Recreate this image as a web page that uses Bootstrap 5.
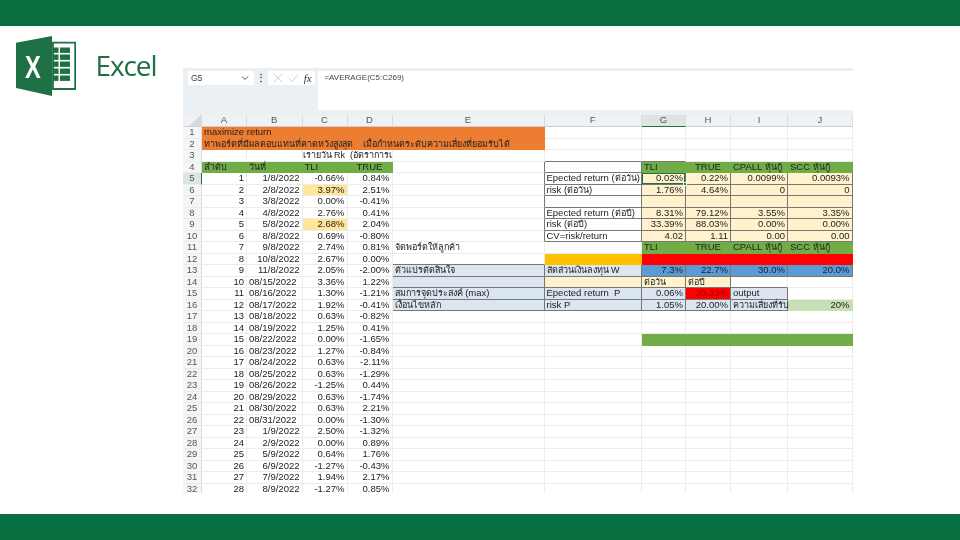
<!DOCTYPE html>
<html lang="th"><head><meta charset="utf-8"><title>Excel</title>
<link href="https://cdn.jsdelivr.net/npm/bootstrap@5.3.0/dist/css/bootstrap.min.css" rel="stylesheet">
<style>
html,body{height:100%;}
body{width:960px;height:540px;overflow:hidden;background:#fff;display:flex;flex-direction:column;font-family:"Noto Sans",sans-serif;}
.topbar,.botbar{height:26px;background:#076e3f;flex:none;}
.stage{flex:1;min-height:0;display:flex;align-items:flex-start;}
.brand{width:183px;flex:none;padding:10px 0 0 16px;display:flex;align-items:flex-start;gap:19.5px;filter:blur(.3px);}
.brandname{font-family:"Open Sans",sans-serif;font-size:28px;line-height:1;color:#1e7145;letter-spacing:-1.1px;margin-top:15px;}
.win{width:670px;height:424.5px;margin-top:42px;display:flex;flex-direction:column;overflow:hidden;filter:blur(.3px);}
.fbar{height:47px;background:#ebf0f4;padding:3px 0 0 5px;display:flex;align-items:flex-start;font:8px "Liberation Sans",sans-serif;color:#444;flex:none;}
.namebox{width:66px;height:14px;background:#fff;border-radius:2px;display:flex;align-items:center;justify-content:space-between;padding:0 5px 0 3px;font-size:8.5px;}
.fx{width:47px;height:14px;background:#fff;border-radius:2px;display:flex;align-items:center;justify-content:space-between;padding:0 3px 0 5px;}
.fx i{font:italic 11px "Liberation Serif",serif;color:#333;}
.dots{width:13.7px;height:14px;text-align:center;color:#555;font-weight:700;font-size:10px;line-height:13px;}
.fbox{flex:1;height:39px;margin-left:3.7px;background:#fff;border-radius:2px 0 0 2px;padding:2px 6px;}
.xl{table-layout:fixed;width:669.5px;border-collapse:separate;border-spacing:0;font:9.5px/10.5px "Liberation Sans",sans-serif;color:#222;}
.xl tr{height:11.5px;}
.xl thead tr{height:12px;}
.xl td{padding:0 2px;border-right:1px solid #ececec;border-bottom:1px solid #ececec;white-space:nowrap;vertical-align:bottom;}
.xl th{font-weight:400;text-align:center;color:#555;background:#f3f5f7;padding:0;border-right:1px solid #dcdcdc;border-bottom:1px solid #ececec;}
.xl thead th{background:#eff2f4;border-bottom:1px solid #cfcfcf;}
.xl th.corner{background:linear-gradient(135deg,#eff2f4 62%,#d6d9db 62%);}
.xl thead th.on{background:#e0e3e3;border-bottom:1px solid #217346;}
.xl tbody th.on{background:#e0e3e3;border-right:1px solid #217346;color:#217346;}
.th{font-size:9px;}
.nl{border-color:transparent !important;}
.or{background:#ed7d31;}
.gr{background:#70ad47;}
.am{background:#ffc000;}
.rd{background:#f00;}
.dk{color:#8e0000;}
.ye{background:#fff2cc;}
.hl{background:#ffe699;}
.lb{background:#dce6f1;}
.bl{background:#5b9bd5;}
.lg{background:#c6e0b4;}
.xl td.b{border-right-color:#777;border-bottom-color:#777;}
.xl td.rb{border-right-color:#777;}
.xl td.bb{border-bottom-color:#777;}
.nopad{padding-left:0 !important;}
.xl td.sel{position:relative;box-shadow:inset 0 0 0 1px #217346;}
.xl td.sel::after{content:"";position:absolute;right:-2px;bottom:-2px;width:4px;height:4px;background:#217346;border:1px solid #fff;}
</style></head><body>
<div class="topbar"></div>
<div class="stage"><div class="brand">
<svg width="60" height="60" viewBox="0 0 60 60" role="img" aria-label="Excel logo">
<path d="M37 6.7H59.2V53H37Z" fill="#fff" stroke="#1e7145" stroke-width="1.8"/>
<g fill="#1e7145"><rect x="37" y="11.5" width="5.5" height="5.4"/><rect x="44" y="11.5" width="10" height="5.4"/><rect x="37" y="18.5" width="5.5" height="5.4"/><rect x="44" y="18.5" width="10" height="5.4"/><rect x="37" y="25.5" width="5.5" height="5.4"/><rect x="44" y="25.5" width="10" height="5.4"/><rect x="37" y="32.5" width="5.5" height="5.4"/><rect x="44" y="32.5" width="10" height="5.4"/><rect x="37" y="39.5" width="5.5" height="5.4"/><rect x="44" y="39.5" width="10" height="5.4"/></g>
<path d="M0 6.7 36 0V60L0 52Z" fill="#1e7145"/>
<text transform="translate(17 41.5) scale(.74 1)" text-anchor="middle" font-family="Liberation Sans" font-weight="700" font-size="32" fill="#fff">X</text></svg>
<span class="brandname">Excel</span></div>
<div class="win"><div class="fbar"><div class="namebox">G5<svg width="8" height="6" viewBox="0 0 8 6"><path d="M1 1.5 4 4.5 7 1.5" fill="none" stroke="#555"/></svg></div><div class="dots">⋮</div><div class="fx"><svg width="10" height="10" viewBox="0 0 10 10"><path d="M1 1 9 9M9 1 1 9" stroke="#c4c4c4" stroke-width=".8"/></svg><svg width="11" height="10" viewBox="0 0 11 10"><path d="M1 5.5 4 8.5 10 1.5" fill="none" stroke="#c4c4c4" stroke-width=".8"/></svg><i>fx</i></div><div class="fbox">=AVERAGE(C5:C269)</div></div>
<table class="xl">
<colgroup><col style="width:19px"><col style="width:45px"><col style="width:55.5px"><col style="width:45px"><col style="width:45px"><col style="width:152px"><col style="width:97.5px"><col style="width:44px"><col style="width:45px"><col style="width:57px"><col style="width:64.5px"></colgroup>
<thead><tr><th class="corner"></th><th>A</th><th>B</th><th>C</th><th>D</th><th>E</th><th>F</th><th class="on">G</th><th>H</th><th>I</th><th>J</th></tr></thead>
<tbody>
<tr><th>1</th><td colspan="5" class="or nl">maximize return</td><td></td><td></td><td></td><td></td><td></td></tr>
<tr><th>2</th><td colspan="5" class="or nl th">ทาพอร์ตที่มีผลตอบแทนที่คาดหวังสูงสุด &nbsp; &nbsp;เมื่อกำหนดระดับความเสี่ยงที่ยอมรับได้</td><td></td><td></td><td></td><td></td><td></td></tr>
<tr><th>3</th><td></td><td></td><td colspan="2" class="nopad th">เรายวัน Rk &nbsp;(อัตราการเ</td><td></td><td class="bb"></td><td class="bb"></td><td></td><td></td><td></td></tr>
<tr><th>4</th><td class="gr nl th">ลำดับ</td><td class="gr nl th">วันที่</td><td class="gr nl">TLI</td><td class="gr nl text-center">TRUE</td><td class="rb"></td><td class="b"></td><td class="gr nl">TLI</td><td class="gr nl text-center">TRUE</td><td class="gr nl">CPALL <span class="th">หุ้นกู้</span></td><td class="gr nl">SCC <span class="th">หุ้นกู้</span></td></tr>
<tr><th class="on">5</th><td class="text-end">1</td><td class="text-end">1/8/2022</td><td class="text-end">-0.66%</td><td class="text-end">0.84%</td><td class="rb"></td><td class="b">Epected return (<span class="th">ต่อวัน</span>)</td><td class="ye b text-end sel">0.02%</td><td class="ye b text-end">0.22%</td><td class="ye b text-end">0.0099%</td><td class="ye b text-end">0.0093%</td></tr>
<tr><th>6</th><td class="text-end">2</td><td class="text-end">2/8/2022</td><td class="text-end hl">3.97%</td><td class="text-end">2.51%</td><td class="rb"></td><td class="b">risk (<span class="th">ต่อวัน</span>)</td><td class="ye b text-end">1.76%</td><td class="ye b text-end">4.64%</td><td class="ye b text-end">0</td><td class="ye b text-end">0</td></tr>
<tr><th>7</th><td class="text-end">3</td><td class="text-end">3/8/2022</td><td class="text-end">0.00%</td><td class="text-end">-0.41%</td><td class="rb"></td><td class="b"></td><td class="ye b"></td><td class="ye b"></td><td class="ye b"></td><td class="ye b"></td></tr>
<tr><th>8</th><td class="text-end">4</td><td class="text-end">4/8/2022</td><td class="text-end">2.76%</td><td class="text-end">0.41%</td><td class="rb"></td><td class="b">Epected return (<span class="th">ต่อปี</span>)</td><td class="ye b text-end">8.31%</td><td class="ye b text-end">79.12%</td><td class="ye b text-end">3.55%</td><td class="ye b text-end">3.35%</td></tr>
<tr><th>9</th><td class="text-end">5</td><td class="text-end">5/8/2022</td><td class="text-end hl">2.68%</td><td class="text-end">2.04%</td><td class="rb"></td><td class="b">risk (<span class="th">ต่อปี</span>)</td><td class="ye b text-end">33.39%</td><td class="ye b text-end">88.03%</td><td class="ye b text-end">0.00%</td><td class="ye b text-end">0.00%</td></tr>
<tr><th>10</th><td class="text-end">6</td><td class="text-end">8/8/2022</td><td class="text-end">0.69%</td><td class="text-end">-0.80%</td><td class="rb"></td><td class="b">CV=risk/return</td><td class="ye b text-end">4.02</td><td class="ye b text-end">1.11</td><td class="ye b text-end">0.00</td><td class="ye b text-end">0.00</td></tr>
<tr><th>11</th><td class="text-end">7</td><td class="text-end">9/8/2022</td><td class="text-end">2.74%</td><td class="text-end">0.81%</td><td class="th">จัดพอร์ตให้ลูกค้า</td><td></td><td class="gr nl">TLI</td><td class="gr nl text-center">TRUE</td><td class="gr nl">CPALL <span class="th">หุ้นกู้</span></td><td class="gr nl">SCC <span class="th">หุ้นกู้</span></td></tr>
<tr><th>12</th><td class="text-end">8</td><td class="text-end">10/8/2022</td><td class="text-end">2.67%</td><td class="text-end">0.00%</td><td class="bb"></td><td class="am nl"></td><td class="rd nl"></td><td class="rd nl"></td><td class="rd nl"></td><td class="rd nl"></td></tr>
<tr><th>13</th><td class="text-end">9</td><td class="text-end">11/8/2022</td><td class="text-end">2.05%</td><td class="text-end">-2.00%</td><td class="lb b th">ตัวแปรตัดสินใจ</td><td class="lb b th">สัดส่วนเงินลงทุน W</td><td class="bl b text-end">7.3%</td><td class="bl b text-end">22.7%</td><td class="bl b text-end">30.0%</td><td class="bl b text-end">20.0%</td></tr>
<tr><th>14</th><td class="text-end">10</td><td>08/15/2022</td><td class="text-end">3.36%</td><td class="text-end">1.22%</td><td class="lb b"></td><td class="ye b"></td><td class="ye b th">ต่อวัน</td><td class="ye b th">ต่อปี</td><td class="bb"></td><td></td></tr>
<tr><th>15</th><td class="text-end">11</td><td>08/16/2022</td><td class="text-end">1.30%</td><td class="text-end">-1.21%</td><td class="lb b"><span class="th">สมการจุดประสงค์</span> (max)</td><td class="lb b">Epected return &nbsp;P</td><td class="lb b text-end">0.06%</td><td class="rd b dk text-end">20.33%</td><td class="lb b">output</td><td></td></tr>
<tr><th>16</th><td class="text-end">12</td><td>08/17/2022</td><td class="text-end">1.92%</td><td class="text-end">-0.41%</td><td class="lb b th">เงื่อนไขหลัก</td><td class="lb b">risk P</td><td class="lb b text-end">1.05%</td><td class="lb b text-end">20.00%</td><td class="lb b th">ความเสี่ยงที่รับ</td><td class="lg nl text-end">20%</td></tr>
<tr><th>17</th><td class="text-end">13</td><td>08/18/2022</td><td class="text-end">0.63%</td><td class="text-end">-0.82%</td><td></td><td></td><td></td><td></td><td></td><td></td></tr>
<tr><th>18</th><td class="text-end">14</td><td>08/19/2022</td><td class="text-end">1.25%</td><td class="text-end">0.41%</td><td></td><td></td><td></td><td></td><td></td><td></td></tr>
<tr><th>19</th><td class="text-end">15</td><td>08/22/2022</td><td class="text-end">0.00%</td><td class="text-end">-1.65%</td><td></td><td></td><td class="gr nl"></td><td class="gr nl"></td><td class="gr nl"></td><td class="gr nl"></td></tr>
<tr><th>20</th><td class="text-end">16</td><td>08/23/2022</td><td class="text-end">1.27%</td><td class="text-end">-0.84%</td><td></td><td></td><td></td><td></td><td></td><td></td></tr>
<tr><th>21</th><td class="text-end">17</td><td>08/24/2022</td><td class="text-end">0.63%</td><td class="text-end">-2.11%</td><td></td><td></td><td></td><td></td><td></td><td></td></tr>
<tr><th>22</th><td class="text-end">18</td><td>08/25/2022</td><td class="text-end">0.63%</td><td class="text-end">-1.29%</td><td></td><td></td><td></td><td></td><td></td><td></td></tr>
<tr><th>23</th><td class="text-end">19</td><td>08/26/2022</td><td class="text-end">-1.25%</td><td class="text-end">0.44%</td><td></td><td></td><td></td><td></td><td></td><td></td></tr>
<tr><th>24</th><td class="text-end">20</td><td>08/29/2022</td><td class="text-end">0.63%</td><td class="text-end">-1.74%</td><td></td><td></td><td></td><td></td><td></td><td></td></tr>
<tr><th>25</th><td class="text-end">21</td><td>08/30/2022</td><td class="text-end">0.63%</td><td class="text-end">2.21%</td><td></td><td></td><td></td><td></td><td></td><td></td></tr>
<tr><th>26</th><td class="text-end">22</td><td>08/31/2022</td><td class="text-end">0.00%</td><td class="text-end">-1.30%</td><td></td><td></td><td></td><td></td><td></td><td></td></tr>
<tr><th>27</th><td class="text-end">23</td><td class="text-end">1/9/2022</td><td class="text-end">2.50%</td><td class="text-end">-1.32%</td><td></td><td></td><td></td><td></td><td></td><td></td></tr>
<tr><th>28</th><td class="text-end">24</td><td class="text-end">2/9/2022</td><td class="text-end">0.00%</td><td class="text-end">0.89%</td><td></td><td></td><td></td><td></td><td></td><td></td></tr>
<tr><th>29</th><td class="text-end">25</td><td class="text-end">5/9/2022</td><td class="text-end">0.64%</td><td class="text-end">1.76%</td><td></td><td></td><td></td><td></td><td></td><td></td></tr>
<tr><th>30</th><td class="text-end">26</td><td class="text-end">6/9/2022</td><td class="text-end">-1.27%</td><td class="text-end">-0.43%</td><td></td><td></td><td></td><td></td><td></td><td></td></tr>
<tr><th>31</th><td class="text-end">27</td><td class="text-end">7/9/2022</td><td class="text-end">1.94%</td><td class="text-end">2.17%</td><td></td><td></td><td></td><td></td><td></td><td></td></tr>
<tr><th>32</th><td class="text-end">28</td><td class="text-end">8/9/2022</td><td class="text-end">-1.27%</td><td class="text-end">0.85%</td><td></td><td></td><td></td><td></td><td></td><td></td></tr>
</tbody></table></div></div>
<div class="botbar"></div>
</body></html>
